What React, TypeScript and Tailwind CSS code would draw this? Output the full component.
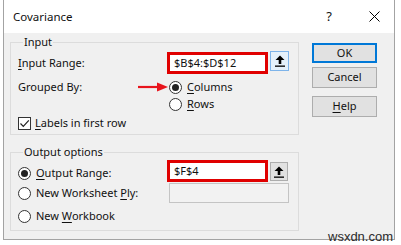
import React from "react";

const font = { fontFamily: '"Noto Sans", "Open Sans", sans-serif' };

function Radio({ checked }: { checked?: boolean }) {
  return (
    <span className="flex h-[13px] w-[13px] shrink-0 items-center justify-center rounded-full border border-[#333] bg-white">
      {checked && <span className="h-[7px] w-[7px] rounded-full bg-[#222]" />}
    </span>
  );
}

function UploadButton({ focused }: { focused?: boolean }) {
  return (
    <div
      className={`flex shrink-0 items-center justify-center border ${
        focused ? "h-[20px] w-[19px] border-[#7eb4ea] bg-[#e5f1fb]" : "h-[19px] w-[18px] border-[#adadad] bg-[#e1e1e1]"
      }`}
    >
      <svg width="10" height="12" viewBox="0 0 10 12">
        <path d="M5 0.5 L9.5 5 L6.3 5 L6.3 9 L3.7 9 L3.7 5 L0.5 5 Z" fill="#000" />
        <rect x="0" y="10.5" width="10" height="1.3" fill="#000" />
      </svg>
    </div>
  );
}

function U({ children }: { children: React.ReactNode }) {
  return <span className="underline underline-offset-2">{children}</span>;
}

export default function App() {
  return (
    <div className="relative h-[245px] w-[401px] overflow-hidden bg-white text-[11px] text-[#111]" style={font}>
      <div className="ml-[3px] flex h-[240px] w-[392px] flex-col border-x border-b border-[#a3a3a3]">
        {/* title bar */}
        <div className="flex h-[33px] items-center bg-white pl-[9px] pr-[14px]">
          <span className="text-[11.5px]">Covariance</span>
          <span className="ml-auto text-[13px]">?</span>
          <svg className="ml-[37px]" width="11" height="11" viewBox="0 0 11 11">
            <path d="M0.5 0.5 L10.5 10.5 M10.5 0.5 L0.5 10.5" stroke="#000" strokeWidth="1" />
          </svg>
        </div>

        {/* body */}
        <div className="flex flex-1 bg-[#f0f0f0]">
          <div className="ml-[6px] w-[289px]">
            <fieldset className="mt-[1px] border border-[#dcdcdc] pb-[3px] pl-[7px]">
              <legend className="ml-[5px] px-[1px] leading-[16px]">Input</legend>
              <div className="mt-[2px] flex h-[22px] items-start">
                <span className="flex h-[22px] w-[149px] items-center">
                  <U>I</U>nput Range:
                </span>
                <div className="flex h-[22px] w-[101px] items-center border-[3px] border-[#e00000] bg-white pl-[4px]">
                  $B$4:$D$12
                </div>
                <div className="ml-[2px] mt-[-1px]">
                  <UploadButton focused />
                </div>
              </div>
              <div className="mt-[5px] flex h-[16px] items-center">
                <span className="w-[120px]">Grouped By:</span>
                <svg width="30" height="10" viewBox="0 0 30 10">
                  <path d="M0 5 L21 5" stroke="#e8141c" strokeWidth="2.2" />
                  <path d="M19 0.5 L30 5 L19 9.5 Z" fill="#e8141c" />
                </svg>
                <span className="ml-[1px]">
                  <Radio checked />
                </span>
                <span className="ml-[5px]">
                  <U>C</U>olumns
                </span>
              </div>
              <div className="mt-[1px] flex h-[16px] items-center pl-[151px]">
                <Radio />
                <span className="ml-[5px]">
                  <U>R</U>ows
                </span>
              </div>
              <div className="mt-[3px] flex h-[16px] items-center">
                <span className="flex h-[13px] w-[13px] items-center justify-center border border-[#333] bg-white">
                  <svg width="11" height="11" viewBox="0 0 11 11">
                    <path d="M1.5 5.5 L4.3 8.3 L9.8 2.3" stroke="#222" strokeWidth="1.2" fill="none" />
                  </svg>
                </span>
                <span className="ml-[4px]">
                  <U>L</U>abels in first row
                </span>
              </div>
            </fieldset>

            <fieldset className="mt-[9px] border border-[#dcdcdc] pb-[6px] pl-[7px]">
              <legend className="ml-[5px] px-[1px] leading-[16px]">Output options</legend>
              <div className="flex h-[22px] items-start">
                <span className="mt-[5px] flex h-[16px] w-[149px] items-center">
                  <Radio checked />
                  <span className="ml-[5px]">
                    <U>O</U>utput Range:
                  </span>
                </span>
                <div className="flex h-[22px] w-[101px] items-center border-[3px] border-[#e00000] bg-white pl-[4px]">
                  $F$4
                </div>
                <div className="ml-[2px] mt-[2px]">
                  <UploadButton />
                </div>
              </div>
              <div className="mt-[1px] flex h-[20px] items-center">
                <span className="flex w-[151px] items-center">
                  <Radio />
                  <span className="ml-[5px]">
                    New Worksheet <U>P</U>ly:
                  </span>
                </span>
                <div className="h-[20px] w-[120px] border border-[#c4c4c4] bg-[#f2f2f2]" />
              </div>
              <div className="mt-[5px] flex h-[16px] items-center">
                <Radio />
                <span className="ml-[5px]">
                  New <U>W</U>orkbook
                </span>
              </div>
            </fieldset>
          </div>

          <div className="ml-[13px] flex flex-col pt-[10px]">
            <div className="flex h-[20px] w-[65px] items-center justify-center border-2 border-[#0078d7] bg-[#e1e1e1]">
              OK
            </div>
            <div className="mt-[4px] flex h-[21px] w-[65px] items-center justify-center border border-[#adadad] bg-[#e1e1e1]">
              Cancel
            </div>
            <div className="mt-[8px] flex h-[21px] w-[65px] items-center justify-center border border-[#adadad] bg-[#e1e1e1]">
              <span>
                <U>H</U>elp
              </span>
            </div>
          </div>
        </div>
      </div>

      <span
        className="absolute left-[328px] top-[229px] text-[13px] leading-[16px] text-[#2a2a2a]"
        style={{ fontFamily: '"Liberation Sans", Arial, sans-serif' }}
      >
        wsxdn.com
      </span>
    </div>
  );
}
